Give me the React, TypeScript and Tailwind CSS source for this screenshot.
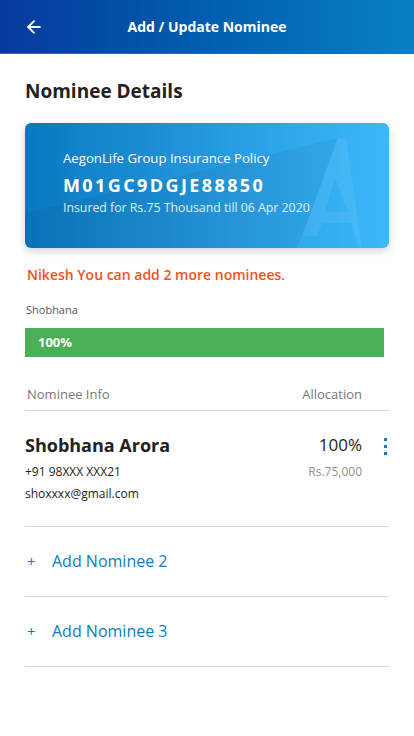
import { ArrowLeft } from 'lucide-react';

const nominees = [
  { name: 'Shobhana Arora', phone: '+91 98XXX XXX21', email: 'shoxxxx@gmail.com', share: '100%', amount: 'Rs.75,000' },
];

const PolicyCard = () => (
  <div className="relative mt-[19px] h-[125px] overflow-hidden rounded-md bg-gradient-to-r from-[#0878c2] to-[#3bb9fb] shadow-[0_3px_8px_rgba(0,0,0,0.18)]">
    <svg className="absolute inset-0" width="364" height="125" viewBox="0 0 364 125">
      <polygon points="0,90 313,15 277,113 272,125 0,125" fill="#000" fillOpacity="0.05" />
      <path
        d="M277 113 L313 15 L321 15 L337 125 L334 125 L326 100 L297 100 L292 113 Z M300 89 L310 55 L323 89 Z"
        fill="#fff"
        fillOpacity="0.07"
        fillRule="evenodd"
      />
    </svg>
    <div className="relative pl-[38px] pt-[25px] text-white">
      <div className="text-[13.2px] leading-[20px]">AegonLife Group Insurance Policy</div>
      <div className="mt-[6px] text-[18px] font-bold leading-[22px] tracking-[2.4px]">M01GC9DGJE88850</div>
      <div className="mt-[3px] text-[12.3px] leading-[18px] text-white/85">Insured for Rs.75 Thousand till 06 Apr 2020</div>
    </div>
  </div>
);

export default function App() {
  return (
    <div className="min-h-[736px] w-[414px] bg-white font-['Open_Sans',sans-serif] text-[#222]">
      <div className="relative flex h-[54px] items-center justify-center border-b border-[#1b6fc0] bg-gradient-to-r from-[#073a9c] to-[#0a80c4]">
        <ArrowLeft className="absolute left-[24px] top-[17px] text-white" size={20} strokeWidth={2.2} />
        <span className="text-[14px] font-bold text-white">Add / Update Nominee</span>
      </div>

      <div className="px-[25px]">
        <h1 className="mt-[24px] text-[19px] font-bold leading-[26px] text-[#222]">Nominee Details</h1>

        <PolicyCard />

        <p className="mt-[16px] pl-[2px] text-[14px] font-semibold leading-[22px] text-[#f4511e]">
          Nikesh You can add 2 more nominees.
        </p>

        <div className="mt-[17px] pl-[1px] text-[11px] leading-[14px] text-[#555]">Shobhana</div>
        <div className="mt-[11px] mr-[5px] flex h-[29px] items-center bg-[#4aaf57] pl-[13px] text-[13px] font-bold text-white">
          100%
        </div>

        <div className="mt-[28px] flex items-center justify-between border-b border-[#d4d4d4] pb-[5px] pl-[2px] pr-[27px] text-[13px] text-[#777]">
          <span>Nominee Info</span>
          <span>Allocation</span>
        </div>

        {nominees.map((n, ids) => (
          <div key={ids} className="flex border-b border-[#d4d4d4] pb-[22px] pt-[21px]">
            <div className="flex-1">
              <div className="text-[18px] font-bold leading-[26px]">{n.name}</div>
              <div className="mt-[4px] text-[12px] leading-[20px]">{n.phone}</div>
              <div className="mt-[2px] text-[12px] leading-[20px]">{n.email}</div>
            </div>
            <div className="flex flex-col items-end">
              <div className="text-[17px] font-medium leading-[26px]">{n.share}</div>
              <div className="mt-[4px] text-[12px] leading-[20px] text-[#8f8f8f]">{n.amount}</div>
            </div>
            <div className="ml-[22px] mr-[2px] flex flex-col gap-[4px] pt-[6px]">
              <span className="h-[3px] w-[3px] bg-[#0a7dc4]" />
              <span className="h-[3px] w-[3px] bg-[#0a7dc4]" />
              <span className="h-[3px] w-[3px] bg-[#0a7dc4]" />
            </div>
          </div>
        ))}

        {[2, 3].map((num) => (
          <div key={num} className="flex h-[70px] items-center border-b border-[#d4d4d4] text-[#0a7dc4]">
            <span className="w-[27px] pl-[2px] text-[15px]">+</span>
            <span className="text-[16px]">Add Nominee {num}</span>
          </div>
        ))}
      </div>
    </div>
  );
}
